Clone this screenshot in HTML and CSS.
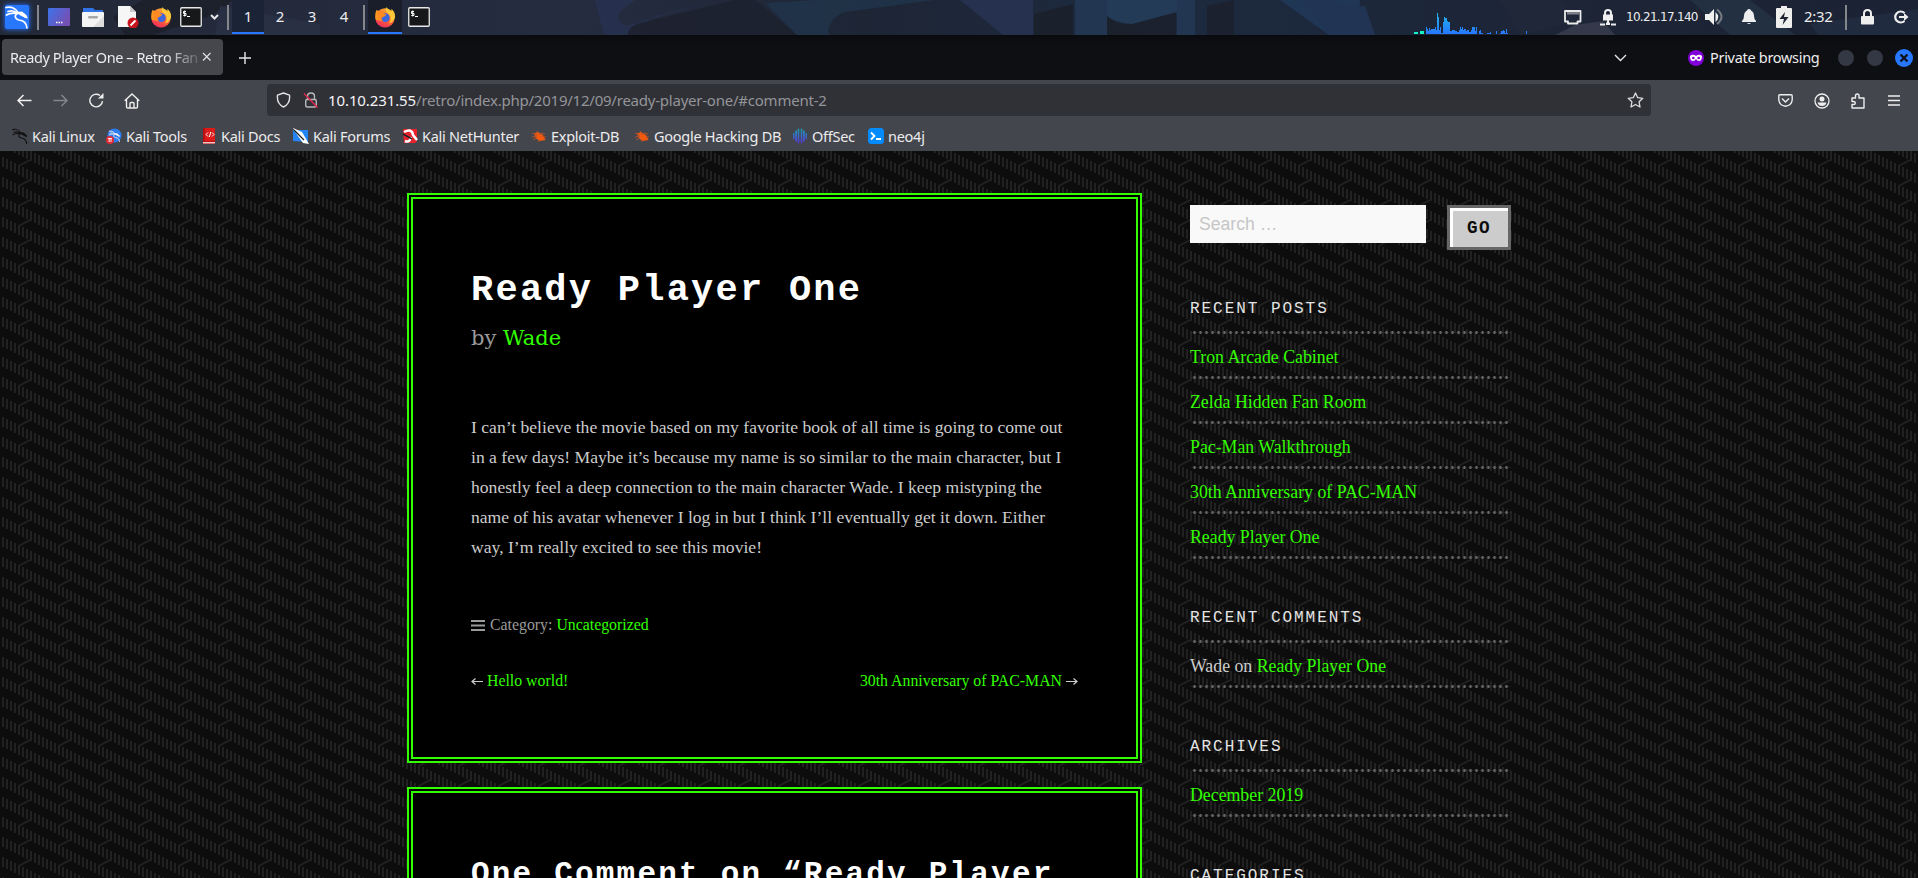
FILE: index.html
```html
<!DOCTYPE html>
<html lang="en">
<head>
<meta charset="utf-8">
<title>Ready Player One – Retro Fanatics</title>
<link rel="stylesheet" href="styles.css">
</head>
<body>
<svg class="defs" width="0" height="0">
  <defs>
    <symbol id="dragon" viewBox="0 0 24 24">
      <path d="M1 2.500C6 1 11 3.500 13 7.500M3 6.500C7 5 10 6 12 8.500M1.500 10C5.500 7.500 9 8 12.500 8.500M12.500 8C17 7.500 20 9 21.500 12.500L19.500 11.500M13 8.500C9 9.500 9.500 14 14 15C19 15.500 21.500 18 22 23" fill="none" stroke="currentColor" stroke-width="1.700" stroke-linecap="round" stroke-linejoin="round"/>
      <path d="M12 7l5-.5 5 4.500.5 2.500-3-1-5-2.500z" fill="currentColor"/>
    </symbol>
    <symbol id="firefox" viewBox="0 0 24 24">
      <circle cx="12" cy="13" r="10.500" fill="url(#fxg)"/>
      <path d="M14 1c-2 3-1 5 1 7 4 3 4 8 1 11 5-1 7-5 7-8 0-4-2-6-4-8l0 3c-2-1-4-2-5-5z" fill="#ffc83a"/>
      <path d="M3 4c-2 3-2 8-1 11l5 1 3-3 3-1-1-4-5-1z" fill="#ff9a24"/>
      <circle cx="12.300" cy="12.800" r="4.800" fill="#3e66df"/>
      <path d="M3 6l5 1 5 2c0 2-2 2.500-4 3.500-1 1-1 3 1 4-4 0-7-3-7-10z" fill="#ff8b21"/>
    </symbol>
    <symbol id="term" viewBox="0 0 22 20">
      <rect x=".75" y=".75" width="20.500" height="18.500" rx="1" fill="#171819" stroke="#e8e8e6" stroke-width="1.300"/>
      <path d="M6 4.500H3.500v2H6v2H3.300M4.700 3.500v6M7 9.500h3" fill="none" stroke="#fff" stroke-width="1"/>
    </symbol>
    <symbol id="bug" viewBox="0 0 16 16">
      <path d="M3 5.500L7 4 12 7 14.500 12 9 13 5 10.500z" fill="#f2590f"/>
      <path d="M1 5l5 2M1 9l5-1M2 12l4-2.500M6 3l3 4M10 5l4 1M11 8l4 1M7 12l1 2" stroke="#b55128" stroke-width=".9"/>
    </symbol>
    <linearGradient id="fxg" x1=".8" y1="0" x2=".3" y2="1"><stop offset="0" stop-color="#ffbd38"/><stop offset=".5" stop-color="#ff6a2b"/><stop offset="1" stop-color="#ef2a62"/></linearGradient>
    <linearGradient id="desk" x1="0" y1="0" x2="1" y2=".5"><stop offset="0" stop-color="#3c73ea"/><stop offset="1" stop-color="#7550b4"/></linearGradient>
    <linearGradient id="off" gradientUnits="userSpaceOnUse" x1="0" y1="0" x2="0" y2="16"><stop offset="0" stop-color="#18a4b4"/><stop offset="1" stop-color="#5a2fd8"/></linearGradient>
    <linearGradient id="cpu" gradientUnits="userSpaceOnUse" x1="0" y1="0" x2="0" y2="21"><stop offset="0" stop-color="#1fb6ea"/><stop offset="1" stop-color="#2777ff"/></linearGradient>
    <linearGradient id="wp" x1="0" y1="0" x2="1" y2="0"><stop offset="0" stop-color="#232938"/><stop offset=".3" stop-color="#252c40"/><stop offset=".45" stop-color="#1e2535"/><stop offset=".6" stop-color="#1c2a3f"/><stop offset=".8" stop-color="#1d2537"/><stop offset="1" stop-color="#1b2233"/></linearGradient>
    <pattern id="weave" width="40" height="20" patternUnits="userSpaceOnUse" y="-1">
      <path d="M3 7v10M7 9v10M11 11v9M15 13v7M19 15v5M23 17v3M27 19v1M11 0v1M15 0v3M19 0v5M23 0v7M27 0v9M31 1v10M35 3v10M39 5v10" stroke="#212121" stroke-width="2"/>
      <path d="M18.500 16L31 9.500" stroke="#212121" stroke-width="1.800"/>
    </pattern>
  </defs>
</svg>

<header class="panel">
  <svg class="wallpaper" viewBox="0 0 1918 35" preserveAspectRatio="none">
    <rect width="1918" height="35" fill="url(#wp)"/>
    <g opacity=".8">
    <path d="M125 35l-12-18 30-17h90l-20 15-60 20z" fill="#1c1f29"/>
    <path d="M220 6l100 18v11H215z" fill="#2b3246"/>
    <path d="M595 0h40c-15 12-25 16-9 26l90-26-60 16-30 19h-22z" fill="#28355a" opacity=".7"/>
    <path d="M628 35q0-9 12-12L735 0h20l42 35z" fill="#1d212e"/>
    <path d="M765 3l50-3h120l-90 12q-15 5-17 20l2 3h-33z" fill="#20354b"/>
    <path d="M960 0h73v35h-30z" fill="#273454"/>
    <path d="M1034 14l39-10v31h-39zM1106 16q12 9 22 8l48-12v23h-70z" fill="#1b1f2a"/>
    <path d="M1075 0h32v35h-32zM1177 0h18v35h-18z" fill="#243a57"/>
    <path d="M1107 0h70v12l-45 12q-20-2-25-9z" fill="#25405d"/>
    <path d="M1207 6l27-6v35h-27z" fill="#1c202c"/>
    <path d="M1280 0h80l-1 30-30 5z" fill="#203a5c"/>
    <path d="M1300 0h30q17 9 35 6l10 29h-45z" fill="#24385a"/>
    <path d="M1500 0h60l20 20-60 15z" fill="#21283a"/>
    <path d="M1575 25l28-4 12 14h-60z" fill="#46485a" opacity=".7"/>
    <path d="M1690 0h60l45 35h-65z" fill="#28384a" opacity=".8"/>
    <path d="M1810 24l108-15v26h-100z" fill="#30405b" opacity=".4"/>
    </g>
  </svg>
  <span class="menu"><svg width="24" height="24"><use href="#dragon"/></svg></span>
  <i class="sep s1"></i>
  <svg class="desk" width="22" height="18"><rect width="22" height="18" rx="1" fill="url(#desk)"/><path d="M8 14.500h1.500m1 0H12m1 0h1.500" stroke="#fff" stroke-width="1.500"/></svg>
  <svg class="folder" width="22" height="20"><path d="M1 1h10l2 2h8v5H1z" fill="#2f73e6"/><rect y="5" width="22" height="15" rx="1" fill="#f4f4f4"/><path d="M22 9v10q0 1-1 1H11z" fill="#dedede"/><rect x="6" y="9" width="10" height="2.500" rx="1.200" fill="#a8a8a8"/></svg>
  <svg class="doc" width="22" height="22"><path d="M0 0h12l6 6v15H0z" fill="#f6f6f6"/><path d="M12 0l6 6h-6z" fill="#c9c9c9"/><circle cx="15" cy="17" r="5.500" fill="#c8151d"/><path d="M12.500 19.500l5-5" stroke="#fff" stroke-width="1.800"/></svg>
  <svg class="fx" width="22" height="22"><use href="#firefox"/></svg>
  <svg class="tm" width="22" height="20"><use href="#term"/></svg>
  <svg class="chev" width="9" height="6"><path d="M1 1l3.500 3.500L8 1" fill="none" stroke="#e6e6e6" stroke-width="2"/></svg>
  <i class="sep s2"></i>
  <nav class="spaces"><b class="on">1</b><b>2</b><b>3</b><b>4</b></nav>
  <i class="sep s3"></i>
  <span class="task"><svg width="22" height="22"><use href="#firefox"/></svg></span>
  <svg class="tm2" width="22" height="20"><use href="#term"/></svg>
  <div class="tray">
    <svg class="graph" width="140" height="21"><path d="M0 19h4v2H0zM6 18h4v3H6z" fill="#14f0c8"/><path fill="url(#cpu)" d="M12 21V14h1v2h1v2h1v-3h1v2h1v-1h4v-2h1v3h1V0h1v4h1v13h1v-3h1v6h2V9h1V4h1v1h2v3h1v1h2v9h2v-1h3v1h2v1h2v-2h1v-3h1v2h1v-2h1v3h1v-1h2v2h1v-1h2v2h2v-2h1v-3h3v4h1v-4h1v7h2v-3h1v-1h1v3h2v1h4v-1h3v-1h1v2h5v-3h1v3h3v-1h1v-2h2v-1h1v1h1v2h1v-4h1v4h1v1h5v1h2v-1h3v1h3v-1h1v1h3v-1h1v-3h1v4h1v1h2v-1h1v1h6v-2h3v2h2v1z"/></svg>
    <svg class="eth" width="18" height="15"><path d="M1 1h15.500v10.500h-3v2h-9.500v-2H1z" fill="none" stroke="#ebebeb" stroke-width="1.800" stroke-linejoin="round"/><path d="M4 2v2.500m2-2.500v2.500m2-2.500v2.500m2-2.500v2.500m2-2.500v2.500m2-2.500v2.500" stroke="#ddd"/></svg>
    <svg class="vpn" width="16" height="17"><path d="M5 6V4q0-3 3-3t3 3v2" fill="none" stroke="#eee" stroke-width="2"/><path d="M3 5.500h10v6H3zM7 11h2v3H7zM0 14.500h5v2H0zM6 13.500h4V16H6zM11 14.500h5v2h-5z" fill="#eee"/></svg>
    <span class="ip">10.21.17.140</span>
    <svg class="spk" width="19" height="18"><path d="M0 6h4l5-5v16l-5-5H0z" fill="#f0f0ee"/><path d="M10.500 4q5.500 5 0 10z" fill="#eee"/><path d="M12 1.500q9 7 0 14.500" fill="none" stroke="#777c84" stroke-width="2"/></svg>
    <svg class="bell" width="14" height="16"><path d="M7 0q2 0 2 1.500Q12 3 12 7q0 3 2 5v1H0v-1q2-2 2-5 0-4 3-5.500Q5 0 7 0zM5 14h4q-2 2-4 0z" fill="#eee"/></svg>
    <svg class="bat" width="16" height="22"><path d="M1 2h4V0h6v2h4q1 0 1 1v18q0 1-1 1H1q-1 0-1-1V3q0-1 1-1z" fill="#efefed"/><path d="M9 6l-5.500 7H8l-1.500 6 6-8H8z" fill="#1f2430"/></svg>
    <span class="clock">2:32</span>
    <i class="sep s4"></i>
    <svg class="lock" width="13" height="16"><path d="M3 8V4.500q0-3.500 3.500-3.500T10 4.500V8" fill="none" stroke="#eee" stroke-width="2"/><rect y="7" width="13" height="8.500" rx="1" fill="#eee"/></svg>
    <svg class="out" width="15" height="14"><path d="M10.500 3A5.500 5.500 0 1 0 10.500 11" fill="none" stroke="#eee" stroke-width="2.200"/><path d="M5 6h5V3l4.500 4-4.500 4V8H5z" fill="#eee"/></svg>
  </div>
</header>

<div class="tabs">
  <div class="tab"><span>Ready Player One – Retro Fan</span><svg width="10" height="10"><path d="M1 1l7.500 7.500M8.500 1L1 8.500" stroke="#e4e4e6" stroke-width="1.100"/></svg></div>
  <svg class="plus" width="12" height="12"><path d="M6 0v12M0 6h12" stroke="#e8e8ea" stroke-width="1.400"/></svg>
  <svg class="down" width="13" height="8"><path d="M1 1l5.500 5.500L12 1" fill="none" stroke="#e6e6e8" stroke-width="1.400"/></svg>
  <svg class="mask" width="16" height="16"><circle cx="8" cy="8" r="8" fill="#8000d7"/><path d="M2 6q3-2.500 6 0 3-2.500 6 0 0 5-3 5-2 0-3-2-1 2-3 2-3 0-3-5z" fill="#fff"/><circle cx="5.300" cy="8" r="1.300" fill="#8000d7"/><circle cx="10.700" cy="8" r="1.300" fill="#8000d7"/></svg>
  <span class="private">Private browsing</span>
  <i class="win"></i><i class="win"></i>
  <svg class="close" width="18" height="18"><circle cx="9" cy="9" r="9" fill="#2777ff"/><path d="M5.500 5.500l7 7m0-7l-7 7" stroke="#10131a" stroke-width="2.400"/></svg>
</div>

<div class="nav">
  <svg class="back" width="15" height="13"><path d="M14.500 6.500H1M6.500 1L1 6.500 6.500 12" fill="none" stroke="#f0f0f2" stroke-width="1.500"/></svg>
  <svg class="fwd" width="15" height="13"><path d="M.5 6.500H14M8.500 1L14 6.500 8.500 12" fill="none" stroke="#85868c" stroke-width="1.500"/></svg>
  <svg class="reload" width="15" height="15"><path d="M13.500 8A6.300 6.300 0 1 1 11 2.500" fill="none" stroke="#eee" stroke-width="1.400"/><path d="M14.500 0v5.500H9z" fill="#eee"/></svg>
  <svg class="home" width="16" height="16"><path d="M.7 7.800L8 1l7.300 6.800M2.500 6.500v7.200q0 1.300 1.300 1.300h8.400q1.300 0 1.300-1.300V6.500M6 15v-4.500q0-1 1-1h2q1 0 1 1V15" fill="none" stroke="#eee" stroke-width="1.400"/></svg>
  <div class="url">
    <svg class="shield" width="15" height="16"><path d="M7.500 1l6 2.200c.6 5-1.500 9.600-6 11.800C3 12.800.9 8.200 1.500 3.200z" fill="none" stroke="#e2e2e4" stroke-width="1.400" stroke-linejoin="round"/></svg>
    <svg class="insec" width="16" height="17"><path d="M4.500 7.500V4.500q0-3.500 3.500-3.500t3.500 3.500v3" fill="none" stroke="#b8b8bb" stroke-width="1.400"/><rect x="2.700" y="7.500" width="10.600" height="7.500" rx="1.500" fill="none" stroke="#b8b8bb" stroke-width="1.400"/><path d="M1 1.500l13.500 14" stroke="#e22850" stroke-width="1.500"/></svg>
    <span class="addr"><em>10.10.231.55</em>/retro/index.php/2019/12/09/ready-player-one/#comment-2</span>
    <svg class="star" width="17" height="16"><path d="M8.500 1l2.200 4.700 5.100.6-3.700 3.500.9 5.200-4.500-2.500L4 15l.9-5.200L1.200 6.300l5.100-.6z" fill="none" stroke="#dedee0" stroke-width="1.300" stroke-linejoin="round"/></svg>
  </div>
  <svg class="pocket" width="15" height="13"><path d="M2 .8h11q1.200 0 1.200 1.200v4Q13.500 11.500 7.500 12.200 1.500 11.500.8 6V2Q.8.800 2 .8zM4 4.500L7.500 8 11 4.500" fill="none" stroke="#eee" stroke-width="1.400"/></svg>
  <svg class="acct" width="16" height="16"><circle cx="8" cy="8" r="7" fill="none" stroke="#eee" stroke-width="1.300"/><circle cx="8" cy="6" r="2.500" fill="#eee"/><path d="M3.500 9.500h9Q11.500 13 8 13t-4.500-3.500z" fill="#eee"/></svg>
  <svg class="ext" width="14" height="16"><path d="M1 5h3.500V3q0-2 1.800-2T8 3v2h5v10H1v-3.500h1.500q1.800 0 1.800-1.500T2.500 8.500H1z" fill="none" stroke="#eee" stroke-width="1.400" stroke-linejoin="round"/></svg>
  <svg class="burger" width="12" height="11"><path d="M0 1h12M0 5.500h12M0 10h12" stroke="#eee" stroke-width="1.300"/></svg>
</div>

<div class="marks">
  <span><svg class="dark" width="16" height="16"><use href="#dragon"/></svg>Kali Linux</span>
  <span><svg width="16" height="16"><circle cx="8.500" cy="7.500" r="7" fill="#2c7cf0"/><use href="#dragon" x="2.500" y="2" width="12" height="12"/><circle cx="4" cy="12" r="4" fill="#e22b35"/><path d="M2 10.500h4M3.200 10.500V14M5 10.500V14" stroke="#fff" stroke-width=".9"/></svg>Kali Tools</span>
  <span><svg width="16" height="16"><path d="M2 0h12v16H2z" fill="#b80f14"/><path d="M4 0h10v13H4z" fill="#dc1a1a"/><path d="M2 14h12v1.500H2z" fill="#f0c9c9"/><path d="M7 4.500L5 6.500 7 8.500M11 4.500L13 6.500 11 8.500M9.800 4L8.300 9" fill="none" stroke="#fff"/></svg>Kali Docs</span>
  <span><svg width="17" height="16"><path d="M1 2h15v12L1 13z" fill="#2584f5"/><path d="M1 0l9 4 7 12-6-1-5-7z" fill="#fff"/><path d="M2 2l10 10" stroke="#222" stroke-width="1.200"/></svg>Kali Forums</span>
  <span><svg width="16" height="16"><path d="M1 1h14v12l-2 2H2z" fill="#e8212d"/><path d="M2 4q8-4 9 3l4 5M3 13q5 2 6-4" fill="none" stroke="#fff" stroke-width="2.500"/><path d="M1 6l9 5" stroke="#222" stroke-width="1.500"/></svg>Kali NetHunter</span>
  <span><svg width="16" height="16"><use href="#bug"/></svg>Exploit-DB</span>
  <span><svg width="16" height="16"><use href="#bug"/></svg>Google Hacking DB</span>
  <span><svg width="16" height="16"><path d="M1 5h1.500v6H1zM3.200 2.500h1.800v11H3.200zM5.700.8h1.600v14.400H5.700zM8.700.8h1.600v14.400H8.700zM11 2.500h1.800v11H11zM13.500 5H15v6h-1.500z" fill="url(#off)"/></svg>OffSec</span>
  <span><svg width="16" height="16"><rect width="16" height="16" rx="3.500" fill="#018bff"/><path d="M3 4.500l3.500 3.500L3 11.500M8 11h5" fill="none" stroke="#fff" stroke-width="1.800"/></svg>neo4j</span>
</div>

<div class="page">
  <svg class="weave"><rect width="100%" height="100%" fill="url(#weave)"/></svg>
  <div class="cols">
    <main>
      <article class="card">
        <h1>Ready Player One</h1>
        <p class="by">by <a>Wade</a></p>
        <p class="body">I can’t believe the movie based on my favorite book of all time is going to come out<br>in a few days! Maybe it’s because my name is so similar to the main character, but I<br>honestly feel a deep connection to the main character Wade. I keep mistyping the<br>name of his avatar whenever I log in but I think I’ll eventually get it down. Either<br>way, I’m really excited to see this movie!</p>
        <p class="cat"><svg width="14" height="11"><path d="M0 1h14M0 5.500h14M0 10h14" stroke="#9b9b9b" stroke-width="2"/></svg>Category: <a>Uncategorized</a></p>
        <div class="links">
          <span><svg width="12" height="7"><path d="M12 3.500H1.500M4.500.5L1 3.500l3.500 3" fill="none" stroke="#ccc" stroke-width="1.200"/></svg><a>Hello world!</a></span>
          <span><a>30th Anniversary of PAC-MAN</a><svg width="12" height="7"><path d="M0 3.500h10.500M7.500.5L11 3.500l-3.500 3" fill="none" stroke="#ccc" stroke-width="1.200"/></svg></span>
        </div>
      </article>
      <section class="card second"><h2>One Comment on “Ready Player</h2></section>
    </main>
    <aside>
      <form class="search"><div class="field">Search …</div><div class="go">GO</div></form>
      <section><h3>Recent Posts</h3><ul><li><a>Tron Arcade Cabinet</a></li><li><a>Zelda Hidden Fan Room</a></li><li><a>Pac-Man Walkthrough</a></li><li><a>30th Anniversary of PAC-MAN</a></li><li><a>Ready Player One</a></li></ul></section>
      <section><h3>Recent Comments</h3><ul><li>Wade on <a>Ready Player One</a></li></ul></section>
      <section><h3>Archives</h3><ul><li><a>December 2019</a></li></ul></section>
      <section><h3>Categories</h3><ul></ul></section>
    </aside>
  </div>
</div>
</body>
</html>
```
FILE: styles.css
```css
* { box-sizing: border-box; }
html, body { margin: 0; height: 878px; overflow: hidden; background: #0d0d0d; }
body { display: flex; flex-direction: column; font-family: "Noto Sans", sans-serif; color: #ececee; }
svg { display: block; flex: none; }
svg.defs { position: absolute; }
i { display: block; flex: none; }
a { color: #33ff00; }

/* desktop panel */
.panel { position: relative; height: 35px; flex: none; display: flex; align-items: center; border-bottom: 1px solid #1b1f27; }
.panel > * { position: relative; flex: none; }
.panel > .wallpaper { position: absolute; left: 0; top: 0; width: 1918px; height: 35px; }
.menu { width: 24px; height: 24px; margin-left: 5px; background: #2777ff; color: #fff; border-radius: 2px; box-shadow: 0 0 4px 1px #2560c8; }
.sep { width: 2px; height: 25px; background: #85878c; }
.s1 { margin-left: 8px; }
.desk { margin-left: 9px; }
.folder { margin-left: 12px; }
.doc { margin-left: 14px; }
.fx { margin-left: 10px; }
.tm { margin-left: 8px; }
.chev { margin-left: 8px; }
.s2 { margin-left: 8px; }
.spaces { display: flex; height: 34px; margin-left: 3px; }
.spaces b { width: 32px; text-align: center; font: 15px/33px "Noto Sans", sans-serif; }
.spaces .on { background: #1b2436; border-bottom: 2px solid #2777ff; }
.s3 { margin-left: 3px; }
.task { width: 34px; height: 34px; margin-left: 3px; padding: 6px; background: #191e2a; border-bottom: 2px solid #2777ff; }
.tm2 { margin-left: 6px; }
.tray { display: flex; align-items: center; height: 34px; margin-left: 984px; }
.graph { align-self: flex-end; }
.eth { margin-left: 10px; }
.vpn { margin-left: 18px; }
.ip { width: 72px; margin-left: 10px; font: 12px/32px "DejaVu Sans", sans-serif; letter-spacing: -.7px; white-space: nowrap; }
.spk { margin-left: 7px; }
.bell { margin-left: 18px; }
.bat { margin-left: 20px; }
.clock { width: 29px; margin-left: 12px; font-size: 15px; line-height: 32px; margin-bottom: 2px; letter-spacing: -.3px; }
.s4 { margin-left: 12px; }
.lock { margin-left: 14px; }
.out { margin-left: 20px; }

/* tab strip */
.tabs { height: 45px; flex: none; display: flex; align-items: center; background: linear-gradient(#0a0b0e, #0e0f13 8px); }
.tab { width: 221px; height: 36px; margin: 0 0 1px 2px; padding: 0 11px 0 8px; display: flex; align-items: center; justify-content: space-between; background: #45474d; border-radius: 4px; }
.tab span { width: 190px; overflow: hidden; white-space: nowrap; font-size: 14.500px; letter-spacing: -.43px; -webkit-mask-image: linear-gradient(90deg, #000 155px, transparent 195px); mask-image: linear-gradient(90deg, #000 155px, transparent 195px); }
.plus { margin-left: 16px; }
.down { margin-left: 1363px; }
.mask { margin-left: 61px; }
.private { width: 109px; margin: 0 0 2px 6px; font-size: 14.500px; letter-spacing: -.3px; white-space: nowrap; }
.win { width: 16px; height: 16px; margin-left: 13px; border-radius: 50%; background: #343845; }
.private + .win { margin-left: 19px; }
.close { margin-left: 12px; }

/* navigation bar */
.nav { height: 41px; flex: none; display: flex; align-items: center; background: #44464d; }
.back { margin-left: 17px; }
.fwd { margin-left: 21px; }
.reload { margin-left: 21px; }
.home { margin-left: 20px; }
.url { width: 1384px; height: 32px; margin-left: 127px; margin-top: -1px; display: flex; align-items: center; background: #303136; border-radius: 4px; }
.shield { margin-left: 9px; }
.insec { margin-left: 12px; }
.addr { flex: 1; margin-left: 9px; font-size: 15px; letter-spacing: -.23px; color: #94959a; }
.addr em { font-style: normal; letter-spacing: -.1px; color: #f4f4f6; }
.star { margin-right: 7px; }
.pocket { margin-left: 127px; }
.acct { margin-left: 21px; }
.ext { margin-left: 21px; }
.burger { margin-left: 23px; }

/* bookmarks */
.marks { height: 30px; flex: none; padding: 0 0 1px 12px; display: grid; grid-template-columns: 94px 95px 91px 110px 129px 103px 158px 76px 60px; background: #44464d; }
.marks span { display: flex; align-items: center; gap: 4px; font-size: 14.500px; letter-spacing: -.27px; white-space: nowrap; }
.marks .dark { color: #111; }

/* site */
.page { position: relative; flex: 1; min-height: 0; overflow: hidden; background: #0d0d0d; font-family: "Liberation Serif", serif; }
.weave { position: absolute; left: 0; top: 0; width: 100%; height: 100%; }
.cols { position: relative; display: flex; gap: 48px; margin: 42px 0 0 407px; }
main { width: 735px; }
.card { height: 570px; padding: 70px 0 0 58px; background: #000; border: 6px double #33ff00; }
.second { margin-top: 24px; padding-top: 61px; }
h1, h2, p, h3, ul { margin: 0; padding: 0; }
h1, h2 { font: bold 37px/42px "Liberation Mono", monospace; letter-spacing: 2.250px; color: #fff; white-space: nowrap; }
h2 { font-size: 31px; letter-spacing: 2.200px; }
.by { margin-top: 12px; font: 21px/30px "DejaVu Serif", serif; color: #9b9b9b; }
.body { margin-top: 59px; font-size: 17.600px; line-height: 30px; color: #ccc; white-space: nowrap; }
.cat { display: flex; align-items: center; margin-top: 48px; font-size: 15.840px; line-height: 30px; color: #9b9b9b; white-space: pre; }
.cat svg { margin-right: 5px; }
.links { width: 607px; display: flex; justify-content: space-between; margin-top: 26px; font-size: 15.840px; line-height: 30px; }
.links span { display: flex; align-items: center; gap: 4px; }

aside { width: 321px; padding-top: 12px; }
.search { display: flex; justify-content: space-between; align-items: flex-start; height: 89px; }
.field { width: 236px; height: 38px; padding-left: 9px; background: #f9f9f9; color: #c6c6c6; font: 17.600px/39px "Liberation Sans", sans-serif; }
.go { width: 64px; height: 45px; border: 3px solid #666; box-shadow: inset 3px 3px #fff; background: #ccc; color: #0d0d0d; text-align: center; font: bold 17.600px/41px "Liberation Mono", monospace; letter-spacing: 1.500px; }
aside section { padding-bottom: 44px; }
h3 { height: 37px; font: 16px/31px "Liberation Mono", monospace; letter-spacing: 1.960px; color: #e4e4e4; text-transform: uppercase; }
/* round 3px dots on a 6px pitch */
ul, li { list-style: none; background: radial-gradient(circle, #666 1.200px, transparent 1.800px) 1.500px 0 / 6px 3px repeat-x; }
ul { padding-top: 3px; }
li { height: 45px; padding-top: 7px; font-size: 17.800px; line-height: 32px; color: #ccc; background-position: 1.500px 42px; }
```
